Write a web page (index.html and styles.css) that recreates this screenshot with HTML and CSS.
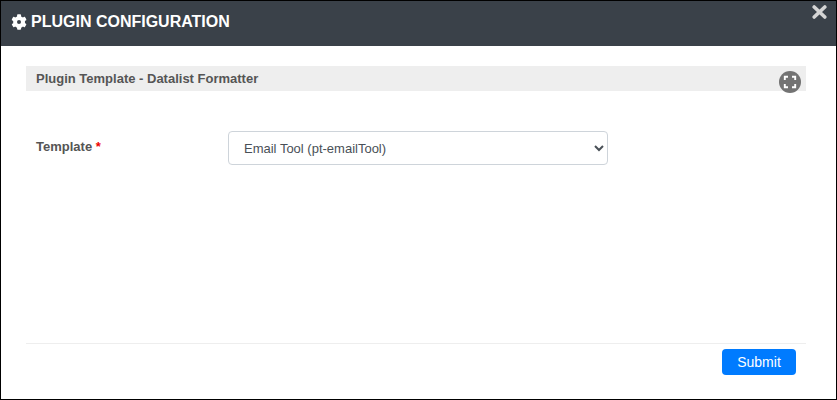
FILE: index.html
```html
<!DOCTYPE html>
<html lang="en">
<head>
<meta charset="utf-8">
<title>Plugin Configuration</title>
<link rel="stylesheet" href="styles.css">
</head>
<body>
<div class="modal">
  <header class="modal-header">
    <h1 class="modal-title">
      <svg class="gear" viewBox="0 0 512 512" aria-hidden="true"><path fill="#fff" fill-rule="evenodd" d="M487 316l-42-25c4-23 4-47 0-70l42-25c5-3 7-8 5-14-11-35-30-67-54-93-4-4-9-5-14-2l-42 25c-18-15-38-27-60-35V28c0-6-4-10-9-11-37-8-74-8-109 0-5 1-9 5-9 11v49c-22 8-42 20-60 35L93 88c-5-3-10-2-14 2-24 26-43 58-54 93-2 6 0 11 5 14l42 25c-4 23-4 47 0 70l-42 25c-5 3-7 8-5 14 11 35 30 67 54 93 4 4 9 5 14 2l42-25c18 15 38 27 60 35v49c0 6 4 10 9 11 37 8 74 8 109 0 5-1 9-5 9-11v-49c22-8 42-20 60-35l42 25c5 3 10 2 14-2 24-26 43-58 54-93 2-6 0-11-5-14zM256 320a64 64 0 1 1 0-128 64 64 0 0 1 0 128z"/></svg>
      PLUGIN CONFIGURATION
    </h1>
    <svg class="close" viewBox="0 0 15 14" aria-hidden="true"><path fill="none" stroke="#d4d4d4" stroke-width="3.6" stroke-linecap="round" d="M2.2 2 12.8 12M12.8 2 2.2 12"/></svg>
  </header>
  <main class="modal-body">
    <div class="section-bar">
      <span class="section-title">Plugin Template - Datalist Formatter</span>
      <span class="expand">
        <svg viewBox="0 0 22 22" aria-hidden="true"><circle cx="11" cy="11" r="11" fill="#737373"/><path fill="none" stroke="#fff" stroke-width="1.9" d="M5.8 9V5.8H9M13 5.8h3.2V9M16.2 13v3.2H13M9 16.2H5.8V13"/></svg>
      </span>
    </div>
    <div class="field">
      <label class="field-label" for="tpl">Template <span class="req">*</span></label>
      <select class="field-select" id="tpl">
        <option>Email Tool (pt-emailTool)</option>
      </select>
    </div>
  </main>
  <footer class="modal-footer">
    <button class="submit" type="button">Submit</button>
  </footer>
</div>
</body>
</html>
```
FILE: styles.css
```css
* { box-sizing: border-box; }
html, body { margin: 0; height: 100%; background: #fff; }
body { width: 837px; height: 400px; overflow: hidden; font-family: "Liberation Sans", Arial, sans-serif; }
.modal { width: 837px; height: 400px; border: 1px solid #000; display: flex; flex-direction: column; background: #fff; }
.modal-header { height: 45px; background: #3a4149; display: flex; align-items: flex-start; justify-content: space-between; flex: none; }
.modal-title { margin: 11px 0 0 10px; font-size: 16px; line-height: 20px; font-weight: 700; color: #fff; display: flex; align-items: center; gap: 4px; }
.gear { width: 16px; height: 16px; }
.close { width: 15px; height: 14px; margin: 4px 9px 0 0; flex: none; }
.modal-body { flex: 1; padding: 20px 30px 0 25px; }
.section-bar { height: 25px; background: #eee; display: flex; align-items: flex-start; justify-content: space-between; padding: 5px 5px 0 10px; position: relative; }
.section-title { font-size: 13px; line-height: 16px; font-weight: 700; color: #555; }
.expand { position: absolute; right: 5px; top: 5px; width: 22px; height: 22px; }
.expand svg { display: block; width: 22px; height: 22px; }
.field { display: flex; align-items: flex-start; margin-top: 40px; padding-left: 10px; }
.field-label { width: 192px; font-size: 13px; line-height: 16px; font-weight: 700; color: #555; margin-top: 8px; }
.req { color: #e00; }
.field-select { width: 380px; height: 34px; padding: 0 11px; font-family: "Liberation Sans", Arial, sans-serif; font-size: 13px; color: #495057; background: #fff; border: 1px solid #ced4da; border-radius: 4px; }
.modal-footer { height: 56px; margin: 0 30px 0 25px; border-top: 1px solid #eee; display: flex; justify-content: flex-end; align-items: flex-start; padding: 5px 10px 0 0; flex: none; }
.submit { width: 74px; height: 26px; padding: 0; border: 0; border-radius: 4px; background: #007bff; color: #fff; font-family: "Liberation Sans", Arial, sans-serif; font-size: 14px; }
```
